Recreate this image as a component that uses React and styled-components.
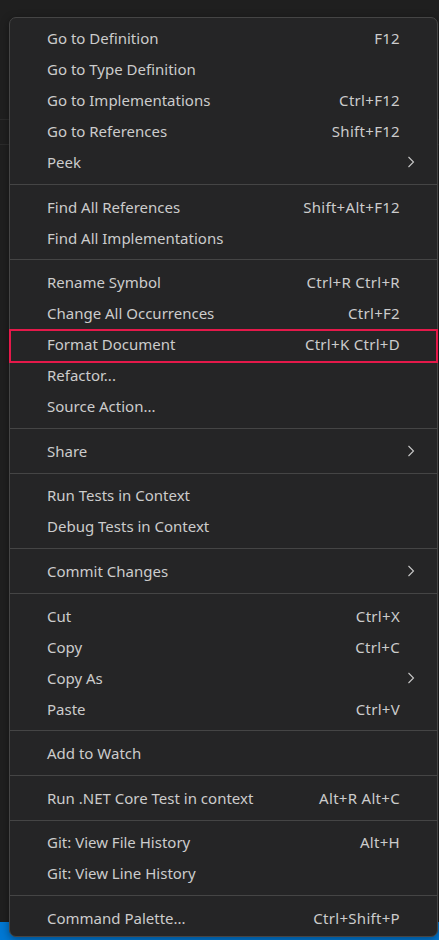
import React from "react";
import styled, { createGlobalStyle } from "styled-components";

const Global = createGlobalStyle`
  html, body {
    margin: 0;
    padding: 0;
    background: #1f1f1f;
  }
  * { box-sizing: border-box; }
`;

const groups = [
  [
    { label: "Go to Definition", keys: "F12" },
    { label: "Go to Type Definition" },
    { label: "Go to Implementations", keys: "Ctrl+F12" },
    { label: "Go to References", keys: "Shift+F12" },
    { label: "Peek", sub: true },
  ],
  [
    { label: "Find All References", keys: "Shift+Alt+F12" },
    { label: "Find All Implementations" },
  ],
  [
    { label: "Rename Symbol", keys: "Ctrl+R Ctrl+R" },
    { label: "Change All Occurrences", keys: "Ctrl+F2" },
    { label: "Format Document", keys: "Ctrl+K Ctrl+D", marked: true },
    { label: "Refactor..." },
    { label: "Source Action..." },
  ],
  [{ label: "Share", sub: true }],
  [
    { label: "Run Tests in Context" },
    { label: "Debug Tests in Context" },
  ],
  [{ label: "Commit Changes", sub: true }],
  [
    { label: "Cut", keys: "Ctrl+X" },
    { label: "Copy", keys: "Ctrl+C" },
    { label: "Copy As", sub: true },
    { label: "Paste", keys: "Ctrl+V" },
  ],
  [{ label: "Add to Watch" }],
  [{ label: "Run .NET Core Test in context", keys: "Alt+R Alt+C" }],
  [
    { label: "Git: View File History", keys: "Alt+H" },
    { label: "Git: View Line History" },
  ],
  [{ label: "Command Palette...", keys: "Ctrl+Shift+P" }],
];

const Chevron = () => (
  <svg width="10" height="14" viewBox="0 0 10 14" fill="none">
    <path d="M2.5 2 L7.5 7 L2.5 12" stroke="#c8c8c8" strokeWidth="1.1" />
  </svg>
);

export default function App() {
  return (
    <>
      <Global />
      <Screen>
        <EditorTop />
        <Breadcrumbs />
        <EditorBody />
        <StatusBar />
        <Menu>
          {groups.map((items, gi) => (
            <React.Fragment key={gi}>
              {gi > 0 && <Separator />}
              {items.map((it) => (
                <Item key={it.label} $marked={it.marked}>
                  <Label>{it.label}</Label>
                  {it.keys && <Keys>{it.keys}</Keys>}
                  <Arrow>{it.sub && <Chevron />}</Arrow>
                </Item>
              ))}
            </React.Fragment>
          ))}
        </Menu>
      </Screen>
    </>
  );
}

const Screen = styled.div`
  position: relative;
  width: 439px;
  height: 940px;
  display: flex;
  flex-direction: column;
  overflow: hidden;
  background: #1f1f1f;
`;

const EditorTop = styled.div`
  height: 120px;
  border-bottom: 1px solid #2b2b2b;
`;

const Breadcrumbs = styled.div`
  height: 25px;
  border-bottom: 1px solid #2b2b2b;
  background: #1f1f1f;
`;

const EditorBody = styled.div`
  flex: 1;
  background: #1f1f1f;
`;

const StatusBar = styled.div`
  height: 18px;
  background: #0078d4;
`;

const Menu = styled.div`
  position: absolute;
  left: 9px;
  top: 17px;
  width: 429px;
  padding: 4.5px 0 3px;
  background: #252526;
  border: 1px solid #454545;
  border-radius: 7px;
  box-shadow: 0 2px 8px rgba(0, 0, 0, 0.4);
  font-family: "Noto Sans", "Open Sans", sans-serif;
  font-size: 15px;
  color: #cccccc;
`;

const Item = styled.div`
  position: relative;
  height: 31px;
  display: flex;
  align-items: center;
  padding-left: 37px;
  padding-right: 21px;

  ${({ $marked }) =>
    $marked &&
    `
    &::after {
      content: "";
      position: absolute;
      left: -1px;
      right: -1px;
      top: 0;
      bottom: -3px;
      border: 2px solid #e5194a;
      pointer-events: none;
    }
  `}
`;

const Label = styled.span`
  flex: 1;
  white-space: nowrap;
`;

const Keys = styled.span`
  white-space: nowrap;
  letter-spacing: 0.3px;
  color: #cccccc;
`;

const Arrow = styled.span`
  width: 16px;
  display: flex;
  justify-content: flex-end;
  align-items: center;
`;

const Separator = styled.div`
  height: 1px;
  margin: 6.3px 0;
  background: #454545;
`;
